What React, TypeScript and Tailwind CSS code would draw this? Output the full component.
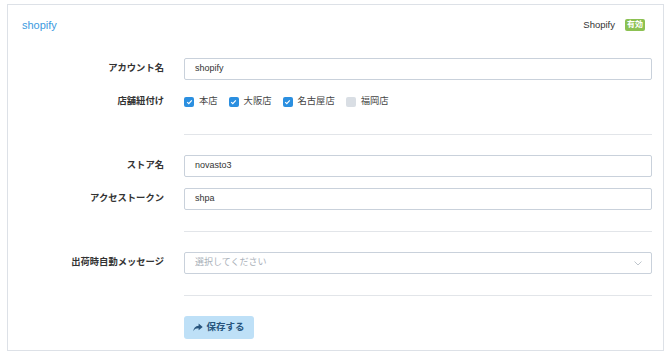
import React from 'react';

const font = { fontFamily: '"Liberation Sans", "Noto Sans CJK JP", sans-serif' };

const Row = ({ label, children }: { label: string; children: React.ReactNode }) => (
  <div className="flex items-center h-[22px]">
    <div className="w-[156px] text-right text-[9.3px] font-bold text-[#333]">{label}</div>
    <div className="ml-[20px] flex-1 h-full">{children}</div>
  </div>
);

const TextInput = ({ value }: { value: string }) => (
  <div className="h-full border border-[#c9d1db] rounded-[2px] flex items-center px-[10px] text-[9px] text-[#333]">
    {value}
  </div>
);

const Check = ({ label, checked }: { label: string; checked: boolean }) => (
  <div className="flex items-center mr-[11px]">
    <div
      className={
        checked
          ? 'w-[10px] h-[10px] rounded-[2px] bg-[#2b8fe0] flex items-center justify-center'
          : 'w-[10px] h-[10px] rounded-[2px] bg-[#d9dee4]'
      }
    >
      {checked && (
        <svg width="7" height="6" viewBox="0 0 7 6">
          <path d="M1.2 3.1 L2.8 4.6 L5.8 1.4" fill="none" stroke="#fff" strokeWidth="1.2" />
        </svg>
      )}
    </div>
    <span className="ml-[5px] text-[9.3px] text-[#444]">{label}</span>
  </div>
);

const Divider = () => (
  <div className="flex">
    <div className="w-[156px]" />
    <div className="ml-[20px] flex-1 border-t border-[#e2e5e9]" />
  </div>
);

export default function App() {
  return (
    <div className="w-[670px] h-[354px] bg-white pt-[4px] pl-[7px]" style={font}>
      <div className="w-[657px] h-[347px] border border-[#dde1e7] pr-[11px]">
        <div className="flex items-center justify-between pt-[13px] pl-[14px] pr-[7px] h-[27px]">
          <span className="text-[11px] text-[#3a9ae0] leading-[14px]">shopify</span>
          <div className="flex items-center">
            <span className="text-[9.5px] text-[#333]">Shopify</span>
            <span className="ml-[10px] h-[12px] px-[2px] rounded-[2px] bg-[#8cc152] text-white text-[8px] font-bold leading-[12px]">
              有効
            </span>
          </div>
        </div>

        <div className="mt-[26px] flex flex-col gap-[10px]">
          <Row label="アカウント名">
            <TextInput value="shopify" />
          </Row>
          <div className="flex items-center h-[22px] mt-[1px]">
            <div className="w-[156px] text-right text-[9.3px] font-bold text-[#333]">店舗紐付け</div>
            <div className="ml-[20px] flex items-center">
              <Check label="本店" checked />
              <Check label="大阪店" checked />
              <Check label="名古屋店" checked />
              <Check label="福岡店" checked={false} />
            </div>
          </div>
        </div>

        <div className="mt-[21px]">
          <Divider />
        </div>

        <div className="mt-[20px] flex flex-col gap-[11px]">
          <Row label="ストア名">
            <TextInput value="novasto3" />
          </Row>
          <Row label="アクセストークン">
            <TextInput value="shpa" />
          </Row>
        </div>

        <div className="mt-[21px]">
          <Divider />
        </div>

        <div className="mt-[20px]">
          <Row label="出荷時自動メッセージ">
            <div className="h-full border border-[#c9d1db] rounded-[2px] flex items-center justify-between px-[10px] text-[9px] text-[#aab1b9]">
              <span>選択してください</span>
              <svg width="8" height="5" viewBox="0 0 8 5" className="mr-[-1px]">
                <path d="M0.5 0.5 L4 4 L7.5 0.5" fill="none" stroke="#b8bfc7" strokeWidth="0.9" />
              </svg>
            </div>
          </Row>
        </div>

        <div className="mt-[21px]">
          <Divider />
        </div>

        <div className="mt-[20px] flex">
          <div className="w-[156px]" />
          <button className="ml-[20px] h-[23px] w-[70px] rounded-[3px] bg-[#bee0f7] flex items-center justify-center text-[9.5px] font-bold text-[#28557e]">
            <svg width="10" height="9" viewBox="0 0 16 14" className="mr-[3px]">
              <path d="M9 0.5 L15.5 6 L9 11.5 V8.3 C5 8.3 2.5 9.3 0.5 13 C0.8 7.8 3.8 4.3 9 4 Z" fill="#28557e" />
            </svg>
            保存する
          </button>
        </div>
      </div>
    </div>
  );
}
